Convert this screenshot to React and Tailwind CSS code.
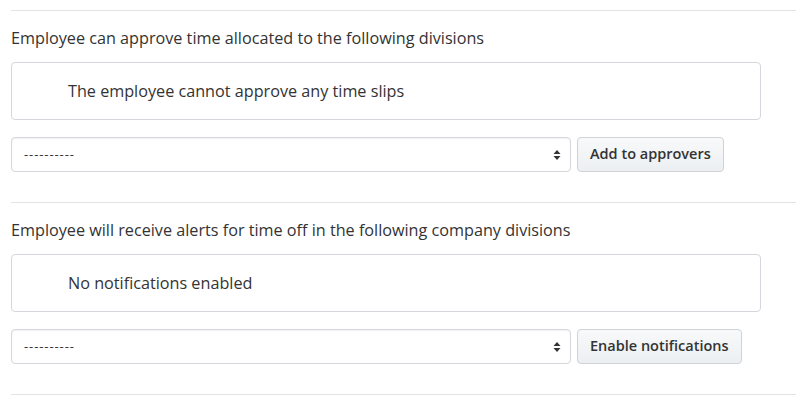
const SECTIONS = [
  {
    label: "Employee can approve time allocated to the following divisions",
    empty: "The employee cannot approve any time slips",
    action: "Add to approvers",
  },
  {
    label: "Employee will receive alerts for time off in the following company divisions",
    empty: "No notifications enabled",
    action: "Enable notifications",
  },
];

const SortIcon = () => (
  <svg width="8" height="12" viewBox="0 0 8 12" className="text-[#333]">
    <path d="M4 1 L7.5 5 H0.5 Z" fill="currentColor" />
    <path d="M4 11 L7.5 7 H0.5 Z" fill="currentColor" />
  </svg>
);

const Section = ({ label, empty, action }) => (
  <div className="border-t border-[#e3e3e3] pb-[30px]">
    <div className="mt-[16px] h-[22px] leading-[22px] text-[16.2px] text-[#333]">
      {label}
    </div>

    {/* Empty list */}
    <div className="mt-[13px] w-[750px] h-[58px] flex items-center pl-[56px] border border-[#d6d6dc] rounded-[4px] text-[16.2px] text-[#333]">
      {empty}
    </div>

    {/* Select + button */}
    <div className="mt-[17px] flex gap-[6px] h-[35px]">
      <div className="w-[560px] h-full flex items-center justify-between pl-[12px] pr-[9px] border border-[#d6d6dc] rounded-[4px] bg-white shadow-[inset_0_1px_2px_rgba(0,0,0,0.06)]">
        <span className="text-[13px] text-[#333] tracking-[0.9px]">----------</span>
        <SortIcon />
      </div>
      <button className="h-full px-[12px] pb-[1px] border border-[#cfd2d6] rounded-[4px] bg-gradient-to-b from-[#f8f9fa] to-[#eceff2] text-[14.5px] font-semibold text-[#333]">
        {action}
      </button>
    </div>
  </div>
);

export default function App() {
  return (
    <div
      className="bg-white w-[796px] h-[405px] overflow-hidden pt-[10px] pl-[11px]"
      style={{ fontFamily: "'Open Sans', sans-serif" }}
    >
      {SECTIONS.map((s) => (
        <Section key={s.action} {...s} />
      ))}
      <div className="border-t border-[#e3e3e3]" />
    </div>
  );
}
